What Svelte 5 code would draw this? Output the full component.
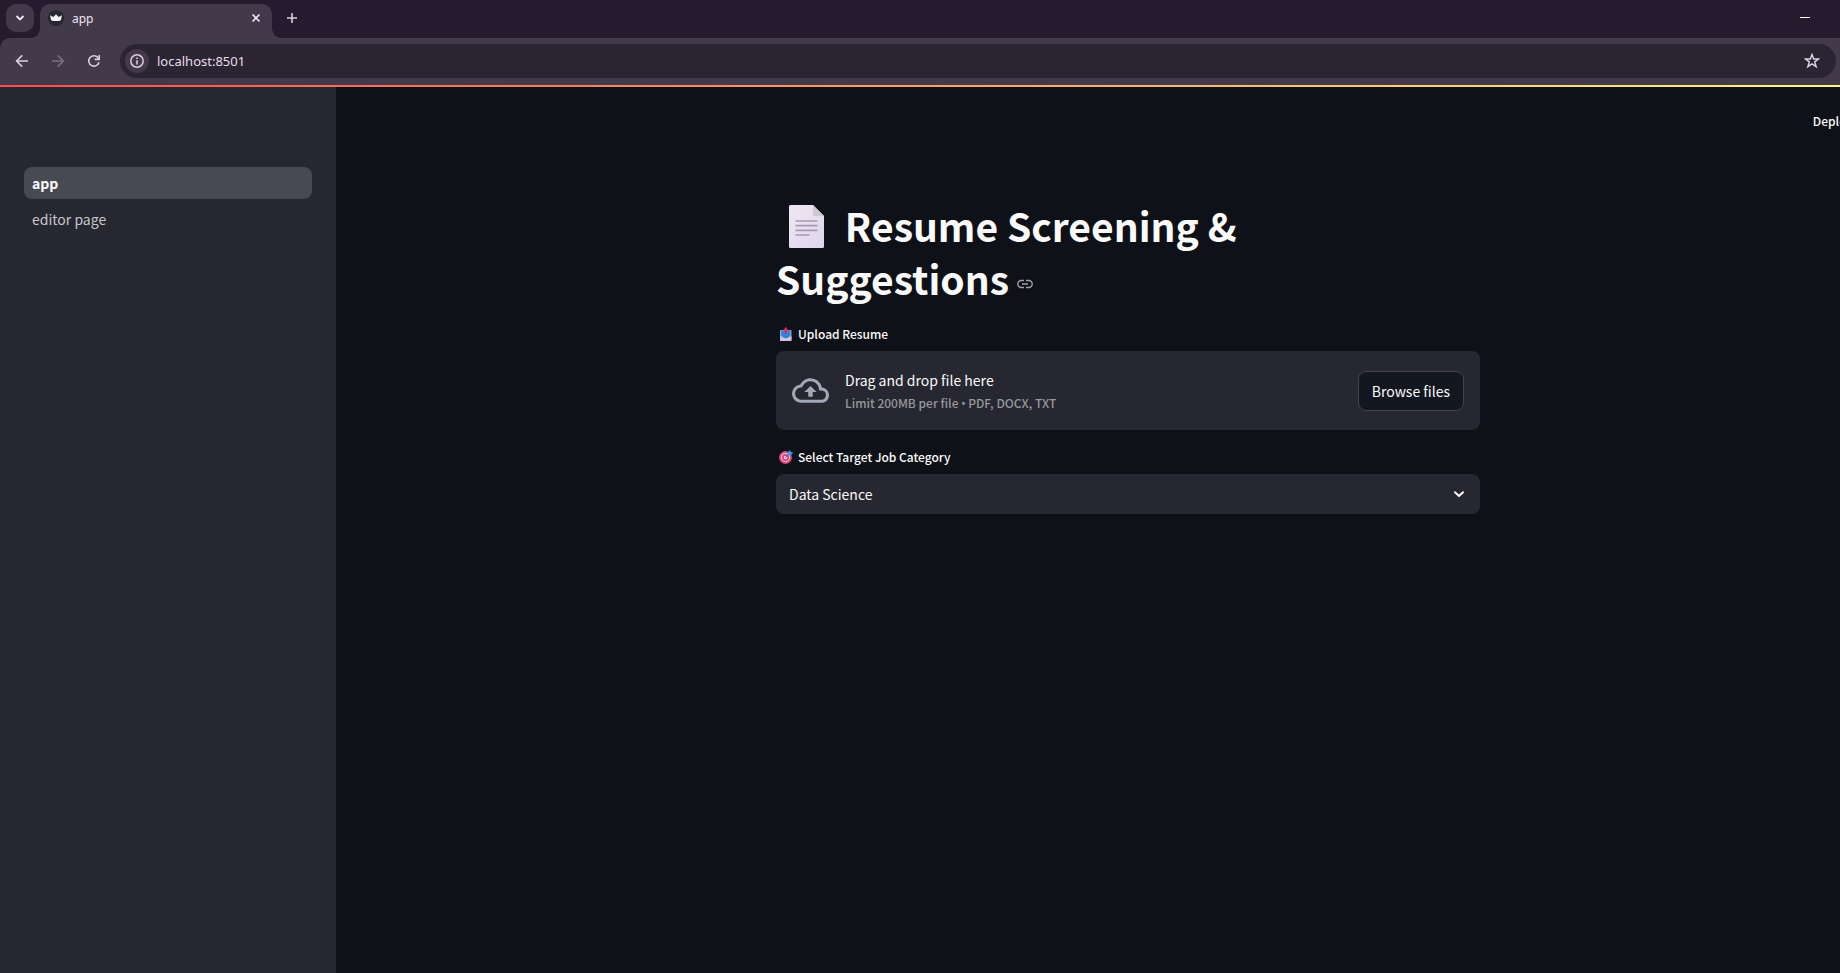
<script>
  let address = $state('localhost:8501');
  let category = $state('Data Science');
  const pages = [
    { name: 'app', current: true },
    { name: 'editor page', current: false }
  ];
</script>

<div class="window">
  <header class="browser">
    <div class="tabs">
      <button class="tab-search" aria-label="Search tabs">
        <svg width="10" height="10" viewBox="0 0 10 10"><path d="M1.5 3 5 6.5 8.5 3" fill="none" stroke="currentColor" stroke-width="1.8" /></svg>
      </button>
      <div class="tab">
        <svg class="favicon" width="16" height="16" viewBox="0 0 16 16">
          <circle cx="8" cy="8" r="8" fill="#262730" />
          <path d="M2 5.2 5.4 7 8 4.2 10.600 7 14 5.2 12.800 10.4Q8 11.4 3.200 10.4Z" fill="#f4f2f5" />
        </svg>
        <span>app</span>
        <button aria-label="Close tab">
          <svg width="10" height="10" viewBox="0 0 10 10"><path d="M1.5 1.5 8.5 8.5M8.5 1.5 1.5 8.5" stroke="currentColor" stroke-width="1.6" /></svg>
        </button>
      </div>
      <button class="new-tab" aria-label="New tab">
        <svg width="12" height="12" viewBox="0 0 12 12"><path d="M6 1V11M1 6H11" stroke="currentColor" stroke-width="1.6" /></svg>
      </button>
      <button class="minimize" aria-label="Minimize">
        <svg width="10" height="10" viewBox="0 0 10 10"><path d="M0 4.5H10" stroke="currentColor" /></svg>
      </button>
    </div>
    <div class="toolbar">
      <button class="tool" aria-label="Back">
        <svg width="16" height="16" viewBox="0 0 16 16"><path d="M14 8H2.8M8.2 2.4 2.6 8 8.2 13.6" fill="none" stroke="currentColor" stroke-width="1.6" /></svg>
      </button>
      <button class="tool" aria-label="Forward" disabled>
        <svg width="16" height="16" viewBox="0 0 16 16"><path d="M2 8H13.2M7.8 2.4 13.4 8 7.8 13.6" fill="none" stroke="currentColor" stroke-width="1.6" /></svg>
      </button>
      <button class="tool" aria-label="Reload">
        <svg width="16" height="16" viewBox="0 0 16 16">
          <path d="M13 9.2A5.2 5.2 0 1 1 11.8 4.4L13 5.6" fill="none" stroke="currentColor" stroke-width="1.6" />
          <path d="M13.2 2V6.4H8.6" fill="none" stroke="currentColor" stroke-width="1.6" />
        </svg>
      </button>
      <div class="omnibox">
        <button class="site-info" aria-label="View site information">
          <svg width="16" height="16" viewBox="0 0 16 16">
            <circle cx="8" cy="8" r="6.2" fill="none" stroke="currentColor" stroke-width="1.5" />
            <path d="M8 7.2V11.4M8 4.4V6" stroke="currentColor" stroke-width="1.5" />
          </svg>
        </button>
        <input type="text" aria-label="Address" bind:value={address} />
        <button class="star" aria-label="Bookmark this page">
          <svg width="16" height="16" viewBox="0 0 16 16"><path d="M8 1.6 9.7 6H14.4L10.7 8.9 12.1 13.6 8 10.8 3.9 13.6 5.3 8.9 1.6 6H6.3Z" fill="none" stroke="currentColor" stroke-width="1.5" /></svg>
        </button>
      </div>
    </div>
  </header>

  <div class="decoration"></div>

  <div class="app">
    <nav class="sidebar" aria-label="Pages">
      {#each pages as page}
        <a href="#{page.name.replace(' ', '_')}" class:current={page.current} aria-current={page.current ? 'page' : undefined}>{page.name}</a>
      {/each}
    </nav>

    <div class="content">
      <div class="app-header"><button>Deploy</button></div>
      <main>
        <h1>
          <svg class="page-emoji" width="60" height="44" viewBox="0 0 60 44">
            <defs>
              <linearGradient id="paper" x1="0" y1="0" x2="1" y2="1">
                <stop offset="0" stop-color="#efe7f4" />
                <stop offset="1" stop-color="#e0d5ec" />
              </linearGradient>
            </defs>
            <path d="M14.500 0H37L48 11V41.500Q48 43 46.500 43H14.500Q13 43 13 41.500V1.500Q13 0 14.500 0Z" fill="url(#paper)" />
            <path d="M37 0 48 11H38.500Q37 11 37 9.500Z" fill="#cdc8d0" />
            <path d="M19.500 16H41.500M19.500 20.700H41.500M19.500 25.400H41.500M19.500 30H33.500" stroke="#a59bb0" stroke-width="1.700" />
          </svg>
          Resume Screening &amp;
          <span class="tail">Suggestions<a href="#resume-screening-suggestions" aria-label="Link to heading"><svg width="16" height="16" viewBox="0 0 16 16"><path d="M7 4.500H4.300A3.500 3.500 0 0 0 4.300 11.500H7M9 4.500H11.700A3.500 3.500 0 0 1 11.700 11.500H9M5 8H11" fill="none" stroke="currentColor" stroke-width="1.400" /></svg></a></span>
        </h1>

        <section class="field">
          <div class="label" id="upload-label">
            <svg width="16" height="16" viewBox="0 0 16 16">
              <rect x="2" y="4" width="11.500" height="11" rx="1" fill="#a99cc9" />
              <path d="M3.300 4.500H12.200V11H3.300Z" fill="#2489dc" />
              <path d="M2 10.500H4.500Q5.500 12.300 7.750 12.300T11 10.500H13.500V14Q13.500 15 12.500 15H3Q2 15 2 14Z" fill="#cfc3e0" />
              <path d="M4.500 10H11Q10.200 12.300 7.750 12.300T4.500 10Z" fill="#2489dc" />
              <path d="M7.750 .8 10 4H9V7.500H6.500V4H5.500Z" fill="#e5245b" />
            </svg>
            Upload Resume
          </div>
          <div class="dropzone" role="group" aria-labelledby="upload-label">
            <svg class="cloud" width="37" height="37" viewBox="0 0 24 24">
              <path d="M19.350 10.040A7.490 7.490 0 0 0 12 4C9.110 4 6.600 5.640 5.350 8.040A5.994 5.994 0 0 0 0 14c0 3.310 2.690 6 6 6h13c2.760 0 5-2.240 5-5 0-2.640-2.050-4.780-4.650-4.960zM19 18H6c-2.210 0-4-1.790-4-4 0-2.050 1.530-3.760 3.560-3.970l1.070-.110.500-.950A5.469 5.469 0 0 1 12 6c2.620 0 4.880 1.860 5.390 4.430l.300 1.500 1.530.110A2.980 2.980 0 0 1 22 15c0 1.650-1.350 3-3 3zM8 13h2.550v3h2.900v-3H16l-4-4z" fill="currentColor" />
            </svg>
            <div class="instructions">
              <span>Drag and drop file here</span>
              <small>Limit 200MB per file <b>•</b> PDF, DOCX, TXT</small>
            </div>
            <button>Browse files</button>
          </div>
        </section>

        <section class="field">
          <label class="label" for="category">
            <svg width="16" height="16" viewBox="0 0 16 16">
              <circle cx="7.500" cy="8.500" r="6.500" fill="#dc3f75" />
              <circle cx="7.500" cy="8.500" r="4.700" fill="#e9b9d0" />
              <circle cx="7.500" cy="8.500" r="3.500" fill="#dc3f75" />
              <circle cx="7.500" cy="8.500" r="1.800" fill="#ecc8da" />
              <path d="M7.500 8.500 12 4" stroke="#1f6fb8" stroke-width="1" />
              <path d="M9.200 4 12.200 1 12.600 3 15.300 3.400 12.400 6.600 9.600 6.400Z" fill="#35a2ee" />
            </svg>
            Select Target Job Category
          </label>
          <div class="select">
            <select id="category" bind:value={category}>
              <option>Data Science</option>
            </select>
            <svg width="12" height="12" viewBox="0 0 12 12"><path d="M2 4.200 6 8 10 4.200" fill="none" stroke="currentColor" stroke-width="2" stroke-linecap="round" stroke-linejoin="round" /></svg>
          </div>
        </section>
      </main>
    </div>
  </div>
</div>

<style>
  :global(body) {
    margin: 0;
    background: #0e1117;
  }
  .window {
    display: flex;
    flex-direction: column;
    min-height: 100vh;
    color: #fafafa;
    font-family: 'Noto Sans CJK SC', 'Noto Sans', sans-serif;
    font-size: 14px;
  }
  svg {
    display: block;
    flex: none;
  }
  button,
  input,
  select {
    font: inherit;
    color: inherit;
    border: 0;
    padding: 0;
    margin: 0;
    background: none;
  }
  button {
    display: flex;
    align-items: center;
    justify-content: center;
  }

  .browser {
    background: #241b2e;
    color: #d9cfe0;
    font-family: 'Noto Sans', 'Open Sans', sans-serif;
  }
  .tabs {
    display: flex;
    align-items: flex-start;
    box-sizing: border-box;
    height: 38px;
    padding: 4px 30px 0 6px;
  }
  .tab-search {
    width: 28px;
    height: 28px;
    border-radius: 10px;
    background: #42394a;
    color: #f0e8f4;
  }
  .tab {
    position: relative;
    display: flex;
    align-items: center;
    gap: 8px;
    box-sizing: border-box;
    width: 232px;
    height: 34px;
    margin-left: 6px;
    padding: 0 8px 6px;
    border-radius: 10px 10px 0 0;
    background: #42394a;
    color: #ece6f0;
    font-size: 12px;
    line-height: 16px;
  }
  .tab::before,
  .tab::after {
    content: '';
    position: absolute;
    bottom: 0;
    width: 10px;
    height: 10px;
  }
  .tab::before {
    left: -10px;
    background: radial-gradient(circle at 0 0, transparent 10px, #42394a 10px);
  }
  .tab::after {
    right: -10px;
    background: radial-gradient(circle at 100% 0, transparent 10px, #42394a 10px);
  }
  .tab span {
    flex: 1;
    padding-top: 2px;
  }
  .tab button,
  .new-tab {
    width: 16px;
    height: 28px;
  }
  .new-tab {
    margin-left: 12px;
  }
  .minimize {
    height: 28px;
    margin-left: auto;
    color: #fff;
  }
  .toolbar {
    display: flex;
    align-items: center;
    box-sizing: border-box;
    height: 47px;
    padding: 0 4px 1px 8px;
    border-radius: 10px 0 0 0;
    background: #42394a;
  }
  .tool {
    width: 28px;
    height: 34px;
    margin-right: 8px;
  }
  .tool:disabled {
    color: #786e80;
  }
  .omnibox {
    display: flex;
    flex: 1;
    align-items: center;
    height: 34px;
    margin-left: 4px;
    padding: 0 16px 0 5px;
    border-radius: 17px;
    background: #2b2433;
  }
  .site-info {
    width: 24px;
    height: 24px;
    border-radius: 50%;
    background: #42394a;
  }
  .omnibox input {
    flex: 1;
    min-width: 0;
    margin-left: 8px;
    color: #e6dfea;
    font-size: 13px;
    line-height: 20px;
  }
  .decoration {
    height: 2px;
    background: linear-gradient(90deg, #ff4b4b 0, #fffd80 calc(100% + 80px));
  }

  .app {
    display: flex;
    flex: 1;
  }
  .sidebar {
    display: flex;
    flex-direction: column;
    gap: 4px;
    box-sizing: border-box;
    width: 336px;
    padding: 80px 24px 24px;
    background: #262730;
  }
  .sidebar a {
    padding: 0 8px;
    border-radius: 8px;
    color: #c8c8cc;
    line-height: 32px;
    text-decoration: none;
  }
  .sidebar a.current {
    background: #474953;
    color: #fafafa;
    font-weight: 700;
  }
  .content {
    flex: 1;
    min-width: 0;
    overflow: hidden;
  }
  .app-header {
    display: flex;
    justify-content: flex-end;
    padding-top: 24px;
    margin-right: -13px;
    font-size: 12px;
    font-weight: 500;
    line-height: 20px;
  }
  main {
    max-width: 704px;
    margin: 0 auto;
    padding: 68px 0 80px 80px;
  }
  h1 {
    margin: 0 0 2px;
    font-size: 39px;
    font-weight: 700;
    line-height: 53px;
  }
  .page-emoji {
    display: inline-block;
    vertical-align: -7px;
  }
  .tail {
    white-space: nowrap;
  }
  .tail a {
    display: inline-block;
    margin-left: 8px;
    color: #a0a1a5;
    vertical-align: 3px;
  }
  .field {
    padding-top: 17px;
  }
  .label {
    display: flex;
    align-items: center;
    gap: 4px;
    margin-bottom: 7px;
    padding-left: 2px;
    font-size: 12px;
    font-weight: 500;
    line-height: 20px;
  }
  .dropzone {
    display: flex;
    align-items: center;
    padding: 16px;
    border-radius: 8px;
    background: #262730;
  }
  .cloud {
    color: #a3a8b8;
  }
  .instructions {
    display: flex;
    flex: 1;
    flex-direction: column;
    margin-left: 16px;
    padding-top: 2px;
    line-height: 22px;
  }
  .instructions small {
    color: #97979c;
    font-size: 12px;
    font-weight: 500;
    line-height: 23px;
  }
  .instructions b {
    font-family: Roboto, sans-serif;
    font-weight: 700;
    line-height: 1;
  }
  .dropzone button {
    height: 40px;
    padding: 0 13px;
    border: 1px solid #41444c;
    border-radius: 8px;
    background: #131720;
  }
  .select {
    position: relative;
    color: #fafafa;
  }
  .select select {
    appearance: none;
    width: 100%;
    height: 40px;
    padding: 0 13px;
    border-radius: 8px;
    background: #262730;
  }
  .select svg {
    position: absolute;
    top: 14px;
    right: 15px;
    pointer-events: none;
  }
</style>
